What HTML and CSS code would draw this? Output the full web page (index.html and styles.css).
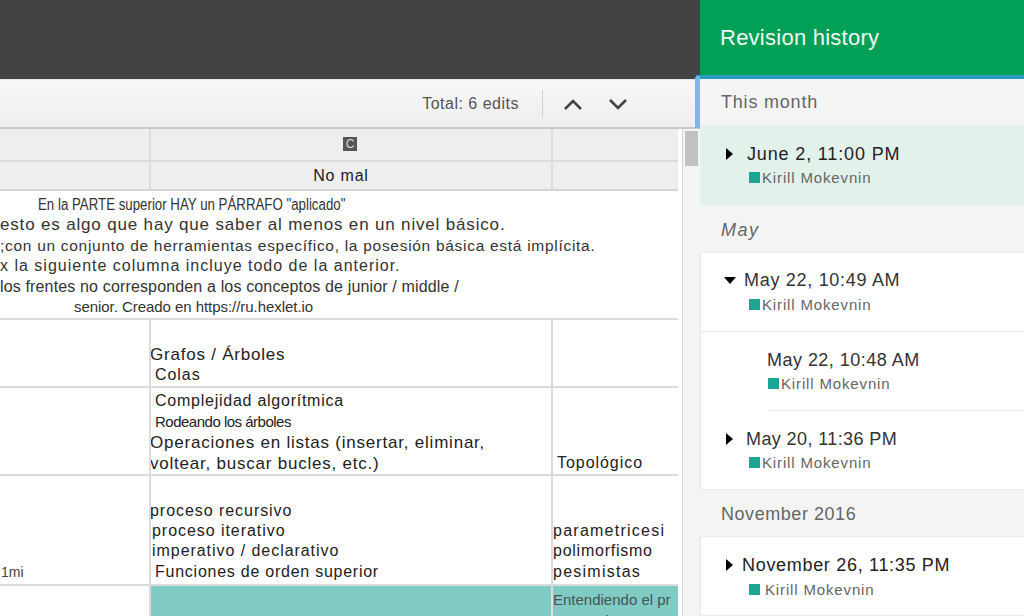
FILE: index.html
```html
<!DOCTYPE html>
<html>
<head>
  <title>Revision history</title>
  <link rel="stylesheet" href="styles.css">
</head>
<body>
  <div class="editor">
    <div class="topbar"></div>
    <div class="toolbar">
      <span class="total">Total: 6 edits</span>
      <span class="divider"></span>
      <svg class="arrow" width="20" height="14" viewBox="0 0 20 14"><path d="M2 12 L10 4 L18 12" fill="none" stroke="#444" stroke-width="2.6"/></svg>
      <svg class="arrow" width="20" height="14" viewBox="0 0 20 14"><path d="M2 3 L10 11 L18 3" fill="none" stroke="#444" stroke-width="2.6"/></svg>
    </div>
    <div class="sheet-wrap">
      <div class="sheet">
        <div class="cell head head-1"></div>
        <div class="cell head head-1 center"><span class="col-mark">C</span></div>
        <div class="cell head head-1 last"></div>

        <div class="cell head head-2"></div>
        <div class="cell head head-2 center nomal">No mal</div>
        <div class="cell head head-2 last"></div>

        <div class="cell note">
          <div class="note-1">En la PARTE superior HAY un PÁRRAFO "aplicado"</div>
          <div class="note-2">esto es algo que hay que saber al menos en un nivel básico.</div>
          <div class="note-3">;con un conjunto de herramientas específico, la posesión básica está implícita.</div>
          <div class="note-4">x la siguiente columna incluye todo de la anterior.</div>
          <div class="note-5">los frentes no corresponden a los conceptos de junior / middle /</div>
          <div class="note-6">senior. Creado en https://ru.hexlet.io</div>
        </div>

        <div class="cell row-a"></div>
        <div class="cell row-a lines pad-1">
          <div class="big">Grafos / Árboles</div>
          <div class="txt in4">Colas</div>
        </div>
        <div class="cell row-a last"></div>

        <div class="cell row-b"></div>
        <div class="cell row-b lines pad-0">
          <div class="txt in4 tight">Complejidad algorítmica</div>
          <div class="thin in4">Rodeando los árboles</div>
          <div class="big">Operaciones en listas (insertar, eliminar,</div>
          <div class="big">voltear, buscar bucles, etc.)</div>
        </div>
        <div class="cell row-b lines last pad-1">
          <div class="txt in4">Topológico</div>
        </div>

        <div class="cell row-c lines"><div class="small">1mi</div></div>
        <div class="cell row-c lines">
          <div class="txt out1">proceso recursivo</div>
          <div class="txt in1">proceso iterativo</div>
          <div class="txt in1">imperativo / declarativo</div>
          <div class="txt in4 tight">Funciones de orden superior</div>
        </div>
        <div class="cell row-c lines last">
          <div class="txt wide">parametricesi</div>
          <div class="txt tight">polimorfismo</div>
          <div class="txt wide">pesimistas</div>
        </div>

        <div class="cell row-d"></div>
        <div class="cell row-d teal"></div>
        <div class="cell row-d teal last clip">
          <div class="thin-dark">Entendiendo el pr</div>
          <div class="thin-dark">y vectorizar</div>
        </div>
      </div>
      <div class="scrollbar"><div class="thumb"></div></div>
    </div>
  </div>

  <aside class="sidebar">
    <div class="side-head">Revision history</div>
    <div class="focus-top"></div>
    <div class="focus-left"></div>

    <div class="group">This month</div>
    <div class="rev selected">
      <div class="when"><span class="tri-right"></span><span class="date d-june">June 2, 11:00 PM</span></div>
      <div class="who"><span class="swatch"></span>Kirill Mokevnin</div>
    </div>

    <div class="group group-may">May</div>
    <div class="rev rev-first">
      <div class="when"><span class="tri-down"></span><span class="date d-may22">May 22, 10:49 AM</span></div>
      <div class="who"><span class="swatch"></span>Kirill Mokevnin</div>
    </div>
    <div class="rev sub">
      <div class="when"><span class="date">May 22, 10:48 AM</span></div>
      <div class="who"><span class="swatch"></span>Kirill Mokevnin</div>
    </div>
    <div class="rev">
      <div class="when"><span class="tri-right"></span><span class="date d-may20">May 20, 11:36 PM</span></div>
      <div class="who"><span class="swatch"></span>Kirill Mokevnin</div>
    </div>

    <div class="group group-nov">November 2016</div>
    <div class="rev">
      <div class="when"><span class="tri-right"></span><span class="date d-nov">November 26, 11:35 PM</span></div>
      <div class="who who-nov"><span class="swatch"></span>Kirill Mokevnin</div>
    </div>
  </aside>
</body>
</html>
```

FILE: styles.css
```css
html, body {
  margin: 0;
  padding: 0;
  height: 616px;
  overflow: hidden;
}

body {
  display: flex;
  width: 1024px;
  background-color: #ffffff;
  font-family: "Liberation Sans", Arial, sans-serif;
  color: #222222;
}

.editor {
  width: 700px;
  flex: none;
  display: flex;
  flex-direction: column;
  overflow: hidden;
}

.topbar {
  height: 80px;
  flex: none;
  background-color: #434343;
  border-bottom: 1px solid #e8e8e8;
  box-sizing: border-box;
}

.toolbar {
  height: 49px;
  flex: none;
  box-sizing: border-box;
  display: flex;
  align-items: center;
  justify-content: flex-end;
  padding-right: 72px;
  background: linear-gradient(#f8f8f8, #eeeeee);
  border-bottom: 2px solid #c8c8c8;
}

.total {
  font-size: 16px;
  letter-spacing: 0.5px;
  color: #555555;
}

.divider {
  width: 1px;
  height: 27px;
  margin: 0 20px 0 23px;
  background-color: #d0d0d0;
}

.arrow + .arrow {
  margin-left: 25px;
}

.sheet-wrap {
  flex: 1;
  display: flex;
  min-height: 0;
}

.sheet {
  width: 678px;
  flex: none;
  display: grid;
  grid-template-columns: 151px 402px 125px;
  grid-template-rows: 33px 29px 129px 68px 88px 110px 32px;
  overflow: hidden;
}

.cell {
  box-sizing: border-box;
  border-right: 2px solid #dcdcdc;
  border-bottom: 2px solid #dcdcdc;
  overflow: hidden;
  white-space: nowrap;
}

.cell.last {
  border-right: none;
}

.head {
  background-color: #eeeeee;
}

.head-2 {
  border-bottom-color: #d4d4d4;
}

.center {
  display: flex;
  align-items: center;
  justify-content: center;
}

.col-mark {
  background-color: #555555;
  color: #dddddd;
  font-size: 12px;
  line-height: 14px;
  padding: 0 3px;
  margin-right: 2px;
  margin-bottom: 2px;
}

.nomal {
  padding-right: 20px;
  font-size: 16px;
  letter-spacing: 0.8px;
}

.note {
  grid-column: 1 / 4;
  border-right: none;
  padding-top: 4px;
  color: #333333;
}

.note div {
  height: 20.4px;
  line-height: 20px;
}

.note-1 {
  margin-left: 38px;
  font-size: 16px;
  transform: scaleX(0.83);
  transform-origin: left;
  width: 400px;
}

.note-2 {
  font-size: 17px;
  letter-spacing: 0.83px;
}

.note-3 {
  font-size: 15.5px;
  letter-spacing: 0.71px;
}

.note-4 {
  font-size: 16px;
  letter-spacing: 1px;
}

.note-5 {
  font-size: 16px;
  letter-spacing: 0.15px;
}

.note-6 {
  margin-left: 74px;
  font-size: 15px;
  letter-spacing: -0.05px;
}

.lines {
  display: flex;
  flex-direction: column;
  justify-content: flex-end;
  padding-bottom: 2px;
}

.pad-1 {
  padding-bottom: 1px;
}

.pad-0 {
  padding-bottom: 0;
}

.lines div {
  line-height: 20.3px;
}

.lines .big {
  line-height: 21px;
  font-size: 17px;
  letter-spacing: 0.78px;
  margin-left: -1px;
}

.txt {
  font-size: 16px;
  letter-spacing: 0.95px;
}

.txt.tight {
  letter-spacing: 0.75px;
}

.txt.wide {
  letter-spacing: 1.25px;
}

.thin {
  font-size: 15px;
  letter-spacing: -0.5px;
}

.small {
  font-size: 14px;
  color: #444444;
  margin-left: 1px;
}

.out1 {
  margin-left: -1px;
}

.in1 {
  margin-left: 1px;
}

.in4 {
  margin-left: 4px;
}

.teal {
  background-color: #80cbc4;
}

.clip {
  padding-top: 3px;
}

.thin-dark {
  font-size: 15px;
  line-height: 21px;
  color: #445555;
}

.scrollbar {
  flex: 1;
  margin-left: 4px;
  box-sizing: border-box;
  background-color: #f4f4f4;
  border-left: 1px solid #d4d4d4;
  padding: 2px 2px 0 2px;
}

.thumb {
  height: 35px;
  background-color: #c1c1c1;
}

.sidebar {
  position: relative;
  width: 324px;
  flex: none;
  display: flex;
  flex-direction: column;
  background-color: #ffffff;
  border-left: 1px solid #dce9fb;
  box-sizing: border-box;
}

.side-head {
  height: 75px;
  flex: none;
  margin-left: -1px;
  padding-left: 20px;
  box-sizing: border-box;
  display: flex;
  align-items: center;
  background-color: #00a056;
  color: #f0faf5;
  font-size: 22px;
  letter-spacing: 0.25px;
}

.focus-top {
  height: 4px;
  flex: none;
  margin-left: -5px;
  background-color: #2a9bc0;
}

.focus-left {
  position: absolute;
  left: -6px;
  top: 76px;
  width: 5px;
  height: 52px;
  background-color: #7db5f3;
  border-radius: 3px 0 0 0;
}

.group {
  height: 47px;
  flex: none;
  margin-left: -1px;
  padding-left: 21px;
  box-sizing: border-box;
  display: flex;
  align-items: center;
  background-color: #f4f4f4;
  border-bottom: 1px solid #ececec;
  color: #666666;
  font-size: 18px;
  letter-spacing: 0.8px;
}

.group-may {
  height: 48px;
  padding-top: 3px;
  font-style: italic;
  letter-spacing: 1.5px;
}

.group-nov {
  padding-top: 2px;
  letter-spacing: 0.55px;
}

.rev {
  height: 79px;
  flex: none;
  box-sizing: border-box;
  padding: 18px 0 0 23px;
  border-bottom: 1px solid #ececec;
}

.rev-first {
  padding-top: 17px;
}

.rev-first .who {
  margin-top: 6px;
}

.rev.selected {
  margin-left: -1px;
  padding-left: 24px;
  background-color: #e2f1ea;
  border-bottom: none;
}

.rev.sub {
  padding-left: 66px;
  border-bottom: none;
  position: relative;
}

.rev.sub::after {
  content: "";
  position: absolute;
  left: 67px;
  right: 0;
  bottom: 0;
  height: 1px;
  background-color: #ececec;
}

.when {
  display: flex;
  align-items: center;
  height: 20px;
  white-space: nowrap;
}

.date {
  font-size: 18px;
  letter-spacing: 0.47px;
  color: #333333;
}

.d-june {
  margin-left: 14px;
  letter-spacing: 0.85px;
  color: #222222;
}

.d-may22 {
  margin-left: 8px;
  letter-spacing: 0.7px;
}

.d-may20 {
  margin-left: 13px;
  letter-spacing: 0.4px;
}

.d-nov {
  margin-left: 9px;
  letter-spacing: 0.69px;
  color: #222222;
}

.tri-right {
  width: 0;
  height: 0;
  border-top: 6px solid transparent;
  border-bottom: 6px solid transparent;
  border-left: 7px solid #000000;
  margin-left: 2px;
}

.tri-down {
  width: 0;
  height: 0;
  border-left: 6.5px solid transparent;
  border-right: 6.5px solid transparent;
  border-top: 7px solid #000000;
}

.who {
  display: flex;
  align-items: center;
  margin-top: 5px;
  margin-left: 25px;
  font-size: 15px;
  letter-spacing: 0.85px;
  color: #666666;
}

.rev.sub .who {
  margin-left: 1px;
}

.who-nov {
  margin-top: 6px;
}

.who-nov .swatch {
  margin-right: 5px;
}

.swatch {
  width: 11px;
  height: 11px;
  margin-right: 2px;
  background-color: #1aa595;
}
```
